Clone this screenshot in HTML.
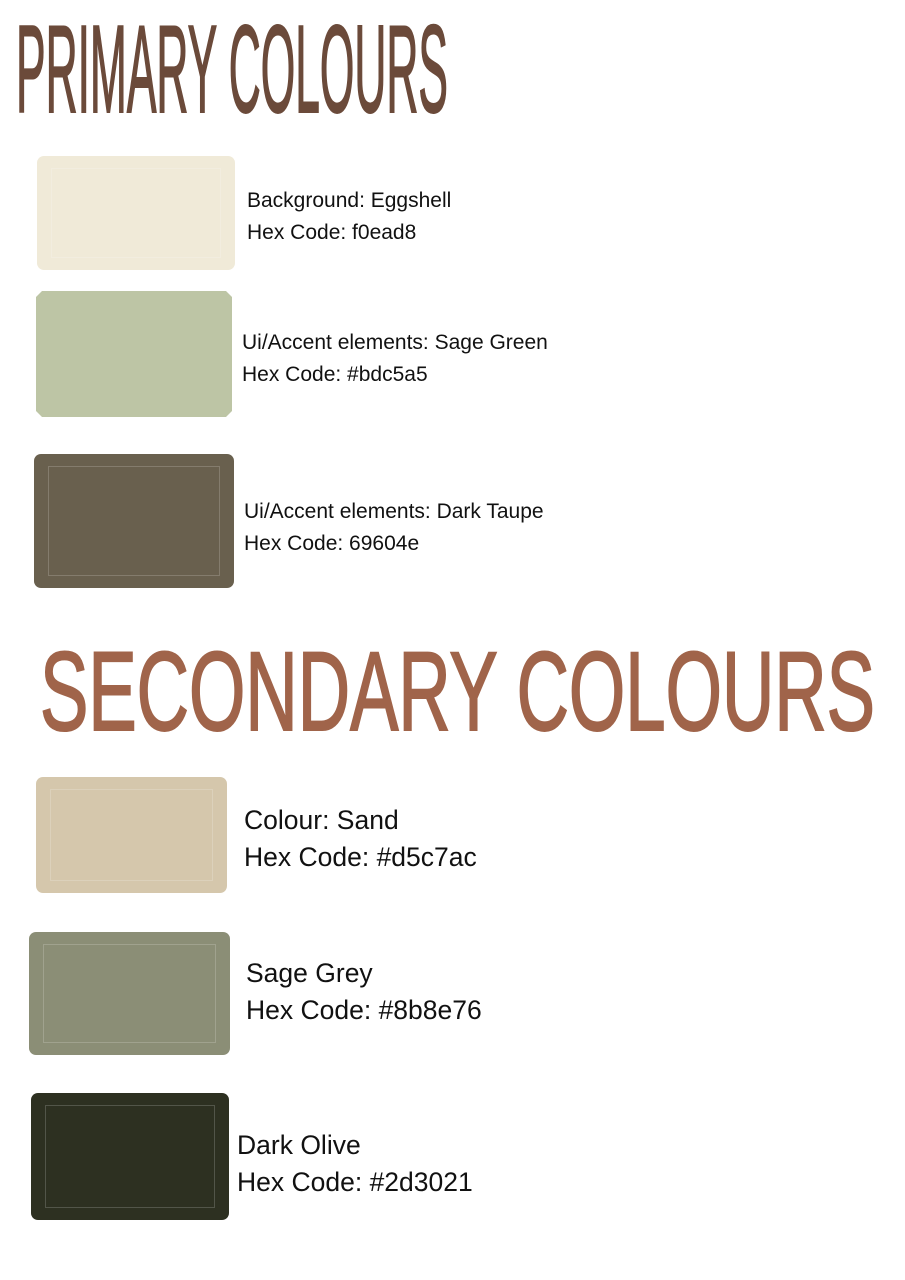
<!DOCTYPE html>
<html><head><meta charset="utf-8"><style>
html,body{margin:0;padding:0;background:#fff;width:905px;height:1280px;overflow:hidden;position:relative;font-family:"Liberation Sans",sans-serif;}
.sw{position:absolute;border-radius:7px;}
.sw i{position:absolute;left:14px;top:12px;right:14px;bottom:12px;border:1px solid rgba(255,255,255,0.18);}
.t{position:absolute;color:#111;white-space:nowrap;}
.s{font-size:21px;line-height:32px;}
.l{font-size:26.5px;line-height:37px;}
svg{position:absolute;left:0;top:0;}
</style></head><body>
<svg width="905" height="1280">
<text x="16" y="112" textLength="432" lengthAdjust="spacingAndGlyphs" font-family="Liberation Sans Narrow, Liberation Sans, sans-serif" font-size="124" fill="#6b4a3a" stroke="#6b4a3a" stroke-width="2">PRIMARY COLOURS</text>
<text x="40" y="730" textLength="835" lengthAdjust="spacingAndGlyphs" font-family="Liberation Sans Narrow, Liberation Sans, sans-serif" font-size="112" fill="#a0644a" stroke="#a0644a" stroke-width="2">SECONDARY COLOURS</text>
</svg>

<div class="sw" style="left:37px;top:156px;width:198px;height:114px;background:#f0ead8"><i></i></div>
<div class="t s" style="left:247px;top:185px">Background: Eggshell<br>Hex Code: f0ead8</div>

<div class="sw" style="left:36px;top:291px;width:196px;height:126px;background:#bdc5a5;border-radius:0;clip-path:polygon(6px 0,190px 0,196px 6px,196px 120px,190px 126px,6px 126px,0 120px,0 6px)"></div>
<div class="t s" style="left:242px;top:327px">Ui/Accent elements: Sage Green<br>Hex Code: #bdc5a5</div>

<div class="sw" style="left:34px;top:454px;width:200px;height:134px;background:#69604e"><i></i></div>
<div class="t s" style="left:244px;top:496px">Ui/Accent elements: Dark Taupe<br>Hex Code: 69604e</div>

<div class="sw" style="left:36px;top:777px;width:191px;height:116px;background:#d5c7ac"><i></i></div>
<div class="t l" style="left:244px;top:802px">Colour: Sand<br>Hex Code: #d5c7ac</div>

<div class="sw" style="left:29px;top:932px;width:201px;height:123px;background:#8b8e76"><i></i></div>
<div class="t l" style="left:246px;top:955px">Sage Grey<br>Hex Code: #8b8e76</div>

<div class="sw" style="left:31px;top:1093px;width:198px;height:127px;background:#2d3021"><i></i></div>
<div class="t l" style="left:237px;top:1127px">Dark Olive<br>Hex Code: #2d3021</div>
</body></html>
